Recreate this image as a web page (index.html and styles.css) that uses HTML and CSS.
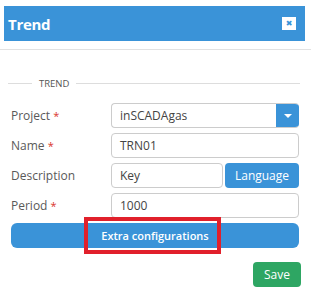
FILE: index.html
```html
<!DOCTYPE html>
<html lang="en">
<head>
    <meta charset="UTF-8">
    <title>Trend</title>
    <link rel="stylesheet" href="styles.css">
</head>
<body>
    <div class="modal">
        <div class="modal_header">
            <span class="modal_title">Trend</span>
            <a href="#" class="modal_close">&#x2716;</a>
        </div>
        <div class="modal_body">
            <div class="legend"><span class="legend_line short"></span><span class="legend_text">TREND</span><span class="legend_line"></span></div>

            <div class="row">
                <label class="row_label">Project <i class="req">*</i></label>
                <div class="select">
                    <span class="select_value">inSCADAgas</span>
                    <span class="select_btn"><i class="caret"></i></span>
                </div>
            </div>
            <div class="row">
                <label class="row_label">Name <i class="req">*</i></label>
                <div class="input">TRN01</div>
            </div>
            <div class="row">
                <label class="row_label">Description</label>
                <div class="input">Key</div>
                <a href="#" class="btn btn_blue btn_lang">Language</a>
            </div>
            <div class="row">
                <label class="row_label">Period <i class="req">*</i></label>
                <div class="input">1000</div>
            </div>
            <div class="extra">
                <a href="#" class="btn btn_blue btn_extra">Extra configurations</a>
                <div class="highlight"></div>
            </div>
            <div class="footer">
                <a href="#" class="btn btn_green">Save</a>
            </div>
        </div>
    </div>
</body>
</html>
```

FILE: styles.css
```css
*{
    margin: 0;
    padding: 0;
    box-sizing: border-box;
}
body{
    background: #fff;
    font-family: "Open Sans", "Noto Sans", sans-serif;
    color: #555;
    width: 311px;
    height: 297px;
    overflow: hidden;
}
.modal_header{
    height: 35px;
    margin: 6px 6px 0 4px;
    background: #3a93d8;
    display: flex;
    align-items: center;
    justify-content: space-between;
    padding: 0 9px 0 4px;
}
.modal_title{
    color: #fff;
    font-size: 15px;
    font-weight: bold;
    letter-spacing: -0.3px;
}
.modal_close{
    width: 14px;
    height: 13px;
    background: #fff;
    color: #3a93d8;
    font-size: 8px;
    line-height: 13px;
    text-align: center;
    text-decoration: none;
    font-family: "DejaVu Sans", sans-serif;
}
.modal_body{
    border-top: 1px solid #e2e2e2;
    margin-top: 8px;
    padding: 0 12px 0 11px;
}
.legend{
    display: flex;
    align-items: center;
    gap: 7px;
    margin: 26px -1px 0 -3px;
    height: 14px;
}
.legend_line{
    flex: 1;
    border-top: 1px solid #ddd;
}
.legend_line.short{
    flex: 0 0 24px;
}
.legend_text{
    font-size: 9.5px;
    color: #555;
}
.row{
    display: flex;
    align-items: center;
    gap: 2px;
    margin-top: 5px;
}
.legend + .row{
    margin-top: 13px;
}
.row_label{
    width: 98px;
    font-size: 12px;
    color: #595959;
}
.req{
    color: #d9342b;
    font-style: normal;
    font-size: 11px;
}
.input,
.select{
    flex: 1;
    height: 25px;
    border: 1px solid #ccc;
    border-radius: 4px;
    font-size: 12px;
    line-height: 23px;
    padding-left: 8px;
    color: #444;
}
.select{
    display: flex;
    padding-left: 0;
    overflow: hidden;
    border-right: none;
}
.select_value{
    flex: 1;
    padding-left: 8px;
}
.select_btn{
    width: 23px;
    background: #3a93d8;
    display: flex;
    align-items: center;
    justify-content: center;
    margin: -1px 0;
}
.caret{
    border-style: solid;
    border-color: #fff transparent transparent transparent;
    border-width: 4px 4px 0 4px;
}
.btn{
    display: block;
    height: 25px;
    line-height: 25px;
    border-radius: 4px;
    color: #fff;
    text-decoration: none;
    font-size: 12px;
    text-align: center;
}
.btn_blue{
    background: #3a93d8;
}
.btn_lang{
    width: 74px;
}
.extra{
    position: relative;
    margin-top: 5px;
}
.btn_extra{
    font-weight: 600;
    font-size: 11px;
    border-radius: 6px;
}
.highlight{
    position: absolute;
    left: 73px;
    top: -6px;
    width: 137px;
    height: 37px;
    border: 4px solid #e1202b;
}
.footer{
    display: flex;
    justify-content: flex-end;
    margin: 14px -2px 0 0;
}
.btn_green{
    background: #2ea663;
    width: 48px;
}
```
